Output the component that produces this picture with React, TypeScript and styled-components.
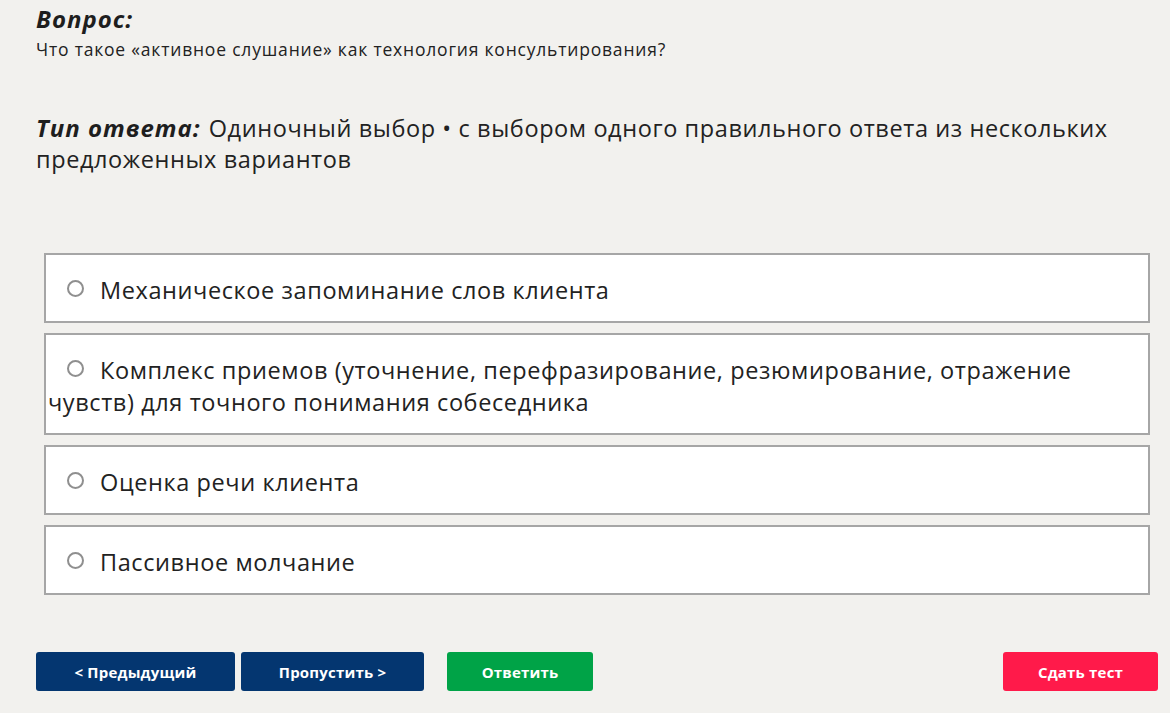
import React, { useState } from 'react';
import styled, { createGlobalStyle } from 'styled-components';

const GlobalStyle = createGlobalStyle`
    body {
        margin: 0;
        background-color: #f2f1ee;
        font-family: 'Open Sans', 'Noto Sans', sans-serif;
        color: #222;
    }
`

const options = [
    'Механическое запоминание слов клиента',
    'Комплекс приемов (уточнение, перефразирование, резюмирование, отражение чувств) для точного понимания собеседника',
    'Оценка речи клиента',
    'Пассивное молчание',
]

export default function App() {
    const [selected, setSelected] = useState<number | null>(null);

    return (
        <>
            <GlobalStyle />
            <Page>
                <Label>Вопрос:</Label>
                <Question>Что такое «активное слушание» как технология консультирования?</Question>

                <AnswerType>
                    <TypeLabel>Тип ответа:</TypeLabel>Одиночный выбор • с выбором одного правильного ответа из нескольких предложенных вариантов
                </AnswerType>

                <Options>
                    {options.map((text, i) => (
                        <Option key={i} onClick={() => setSelected(i)}>
                            <Radio $checked={selected === i} />
                            {text}
                        </Option>
                    ))}
                </Options>

                <Actions>
                    <Button $color="#043670" $width={199}>&lt; Предыдущий</Button>
                    <Button $color="#043670" $width={183}>Пропустить &gt;</Button>
                    <Button $color="#00a347" $width={146} $gap={23}>Ответить</Button>
                    <Button $color="#ff1a4a" $width={155} $push>Сдать тест</Button>
                </Actions>
            </Page>
        </>
    );
}

const Page = styled.div`
    padding: 4px 12px 0 36px;
`

const Label = styled.div`
    font-size: 24px;
    font-weight: 700;
    font-style: italic;
    letter-spacing: 1px;
    line-height: 30px;
    color: #1e1e1e;
`

const TypeLabel = styled.span`
    font-size: 24px;
    font-weight: 700;
    font-style: italic;
    letter-spacing: 1px;
    color: #1e1e1e;
    margin-right: 8px;
`

const Question = styled.div`
    margin-top: 3px;
    font-size: 17.5px;
    letter-spacing: 0.8px;
    line-height: 24px;
    color: #222;
`

const AnswerType = styled.div`
    margin-top: 51px;
    font-size: 23.5px;
    letter-spacing: 0.6px;
    line-height: 31px;
    color: #222;
`

const Options = styled.div`
    margin: 78px 8px 0 8px;
    display: flex;
    flex-direction: column;
    gap: 10px;
`

const Option = styled.div`
    background: #fff;
    border: 2px solid #a6a6a6;
    padding: 19px 16px 15px 2px;
    font-size: 23.5px;
    letter-spacing: 0.6px;
    line-height: 32px;
    color: #222;
    cursor: pointer;
`

const Radio = styled.span<{ $checked: boolean }>`
    display: inline-block;
    width: 17px;
    height: 17px;
    border: 2px solid #8f8f8f;
    border-radius: 50%;
    margin: 0 16px 0 19px;
    vertical-align: 2px;
    box-sizing: border-box;
    background: ${p => (p.$checked ? 'radial-gradient(circle, #333 40%, #fff 45%)' : '#fff')};
`

const Actions = styled.div`
    margin-top: 57px;
    display: flex;
    align-items: center;
    gap: 6px;
`

const Button = styled.button<{ $color: string; $width: number; $gap?: number; $push?: boolean }>`
    width: ${p => p.$width}px;
    height: 39px;
    background: ${p => p.$color};
    color: #fff;
    border: none;
    border-radius: 3px;
    font-family: 'Open Sans', 'Noto Sans', sans-serif;
    font-size: 15px;
    font-weight: 700;
    letter-spacing: 0.2px;
    cursor: pointer;
    margin-left: ${p => (p.$push ? 'auto' : p.$gap ? `${p.$gap - 6}px` : '0')};
`
